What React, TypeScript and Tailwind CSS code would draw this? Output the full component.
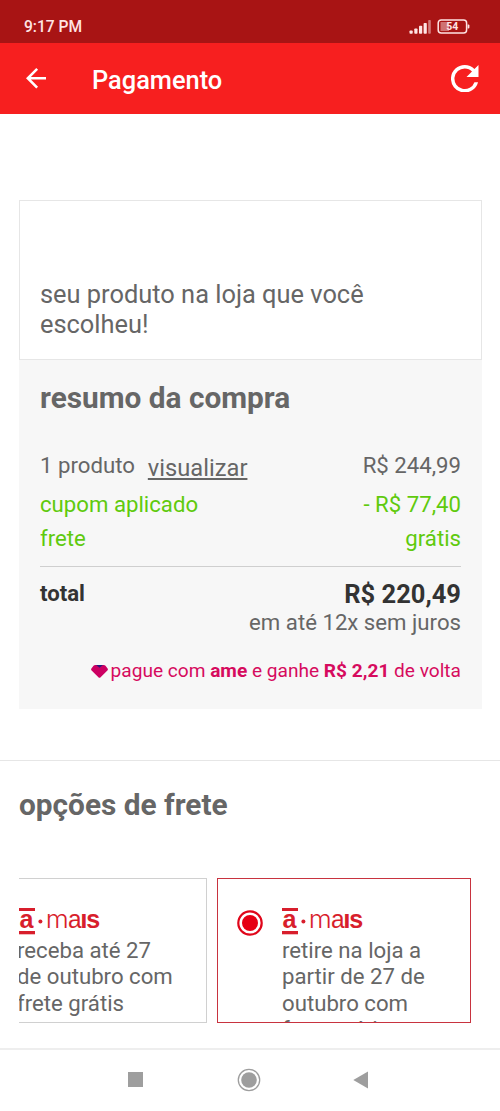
import React from 'react';

function BrandLogo() {
  return (
    <svg width="82" height="27" viewBox="0 0 82 27" className="block" fill="#d81e2c" fontFamily="'Liberation Sans', Arial, sans-serif">
      <rect x="0" y="0" width="16" height="3" />
      <rect x="0" y="23" width="16" height="3.3" />
      <text x="0.5" y="19.7" fontSize="26" fontWeight="700" textLength="14" lengthAdjust="spacingAndGlyphs">a</text>
      <circle cx="21.4" cy="13.4" r="2" />
      <text x="26.8" y="19.7" fontSize="25.5" fontFamily="Inter, sans-serif" fontWeight="300" textLength="23" lengthAdjust="spacingAndGlyphs">m</text>
      <text x="49" y="19.7" fontSize="26" textLength="13.6" lengthAdjust="spacingAndGlyphs">a</text>
      <text x="61.2" y="19.7" fontSize="26" fontWeight="700">ı</text>
      <text x="67.2" y="19.7" fontSize="26" fontWeight="700" textLength="14" lengthAdjust="spacingAndGlyphs">s</text>
    </svg>
  );
}

function StatusBar() {
  return (
    <div className="flex h-[43px] items-center justify-between bg-[#a81414] pl-6 pr-[29px] pt-[10px] text-white">
      <span className="pt-[3px] text-[15.6px] font-medium leading-none text-[#ffe4e4]">9:17 PM</span>
      <svg width="62" height="16" viewBox="0 0 62 16">
        <g fill="#ffe4e4">
          <rect x="0.5" y="11.5" width="3.2" height="3.2" rx="0.8" />
          <rect x="5.3" y="9.5" width="3.2" height="5.2" rx="0.8" />
          <rect x="10" y="6.7" width="3.2" height="8" rx="0.8" />
          <rect x="14.6" y="4" width="3.2" height="10.7" rx="0.8" />
          <rect x="19.2" y="1" width="2.6" height="13.7" rx="0.8" opacity="0.5" />
          <rect x="31.5" y="3" width="8.5" height="9" opacity="0.45" />
          <path d="M58.6 5.5h.8a1 1 0 0 1 1 1v2a1 1 0 0 1-1 1h-.8z" />
          <text x="37.3" y="11.4" fontSize="11" fontWeight="700" textLength="12" lengthAdjust="spacingAndGlyphs">54</text>
        </g>
        <rect x="29.2" y="0.9" width="28.4" height="13" rx="3" fill="none" stroke="#ffe4e4" strokeWidth="1.5" />
      </svg>
    </div>
  );
}

function AppBar() {
  return (
    <header className="flex h-[71px] items-center bg-[#f71f1f] pl-[25.5px] pr-[21.5px] text-white">
      <svg width="20.5" height="20.5" viewBox="4 4 16 16" fill="currentColor">
        <path d="M20 11H7.83l5.59-5.59L12 4l-8 8 8 8 1.41-1.41L7.83 13H20v-2z" />
      </svg>
      <h1 className="ml-[46px] flex-1 pt-[5px] text-[25.4px] font-medium leading-none">Pagamento</h1>
      <svg width="27.5" height="27.5" viewBox="4 4 16 16" fill="currentColor">
        <path d="M17.65 6.35A7.96 7.96 0 0 0 12 4a8 8 0 1 0 7.73 10h-2.08A6 6 0 1 1 12 6c1.66 0 3.14.69 4.22 1.78L13 11h7V4z" />
      </svg>
    </header>
  );
}

function OrderSummary() {
  return (
    <section className="h-[349px] bg-[#f7f7f7] px-[21px] text-[22.2px] text-[#666]">
      <h2 className="pt-[20px] text-[29.8px] font-bold leading-[36px]">resumo da compra</h2>
      <div className="mt-[34px] flex h-[30px] justify-between leading-[30px]">
        <div className="flex">
          <span>1 produto</span>
          <a className="ml-[13px] mt-[3px] text-[23.7px] underline decoration-2 underline-offset-[2px]">visualizar</a>
        </div>
        <span>R$ 244,99</span>
      </div>
      <div className="mt-[9px] flex h-[30px] justify-between leading-[30px] text-[#5fca0d]">
        <span>cupom aplicado</span>
        <span>- R$ 77,40</span>
      </div>
      <div className="mt-1 flex h-[30px] justify-between leading-[30px] text-[#5fca0d]">
        <span>frete</span>
        <span>grátis</span>
      </div>
      <div className="mt-[13px] flex justify-between border-t border-[#cfcfcf] pt-[11px] font-bold leading-[30px] text-[#333]">
        <span>total</span>
        <span className="pt-px text-[25.5px]">R$ 220,49</span>
      </div>
      <p className="-mt-1 text-right text-[22.2px] leading-[34px]">em até 12x sem juros</p>
      <p className="mt-[18px] flex items-center justify-end whitespace-pre text-[19.1px] leading-[28px] text-[#d60b5e]">
        <svg width="17" height="13" viewBox="0 0 17 13" className="mr-[2.5px]">
          <path d="M4.2 0h8.6q1 0 1.7.8l2.1 2.8q.7 1-.2 1.9L9.6 12.3q-1.1 1-2.2 0L.6 5.5q-.9-.9-.2-1.9L2.5.8Q3.200 0 4.2 0z" fill="#cc0062" />
          <path d="M5 0h7L8.500 2.800z" fill="#2d1a80" />
        </svg>
        pague com <b>ame</b> e ganhe <b>R$ 2,21</b> de volta
      </p>
    </section>
  );
}

function ShippingOptions() {
  return (
    <section className="mt-[51px] border-t border-[#e6e6e6] pl-[19px]">
      <h2 className="pt-[26px] text-[29.8px] font-bold leading-[36px] text-[#666]">opções de frete</h2>
      <div className="mt-[55px] flex gap-[10px] text-[22.2px] leading-[26.4px] text-[#666]">
        <div className="h-[145px] w-[188px] overflow-hidden border-y border-r border-[#d0d0d0] pt-[29px]">
          <BrandLogo />
          <p className="-ml-[2px] mt-[2px]">
            receba até 27
            <br />
            de outubro com
            <br />
            frete grátis
          </p>
        </div>
        <div className="flex h-[145px] w-[254px] overflow-hidden border border-[#c8333f] pl-[19px] pt-[29px]">
          <svg width="26" height="26" viewBox="0 0 26 26" className="mt-[2px] shrink-0">
            <circle cx="13" cy="13" r="11.7" fill="none" stroke="#e0061a" strokeWidth="2.2" />
            <circle cx="13" cy="13" r="8" fill="#e60014" />
          </svg>
          <div className="ml-[19px]">
            <BrandLogo />
            <p className="mt-[2px]">
              retire na loja a
              <br />
              partir de 27 de
              <br />
              outubro com
              <br />
              frete grátis
            </p>
          </div>
        </div>
      </div>
    </section>
  );
}

function NavigationBar() {
  return (
    <nav className="mt-auto flex h-[63px] items-center justify-between border-t-2 border-[#eeeeee] pb-[2px] pl-32 pr-[132px] text-[#9e9e9e]">
      <svg width="15" height="15" viewBox="0 0 15 15">
        <path d="M0 0h15v15H0z" fill="currentColor" />
      </svg>
      <svg width="24" height="24" viewBox="0 0 24 24" className="ml-px">
        <circle cx="12" cy="12" r="10.7" fill="none" stroke="currentColor" strokeWidth="1.3" />
        <circle cx="12" cy="12" r="7.8" fill="currentColor" />
      </svg>
      <svg width="15" height="18" viewBox="0 0 15 18">
        <path d="M15 .5v17L.3 9z" fill="currentColor" />
      </svg>
    </nav>
  );
}

export default function App() {
  return (
    <div className="flex h-[1111px] w-[500px] flex-col overflow-hidden bg-white font-['Roboto',sans-serif]">
      <StatusBar />
      <AppBar />
      <main className="pt-[86px]">
        <div className="ml-[19px] w-[463px]">
          <div className="h-[160px] border border-[#e6e6e6] px-5 pt-[78px] text-[25.4px] leading-[30px] text-[#666]">
            seu produto na loja que você escolheu!
          </div>
          <OrderSummary />
        </div>
        <ShippingOptions />
      </main>
      <NavigationBar />
    </div>
  );
}
